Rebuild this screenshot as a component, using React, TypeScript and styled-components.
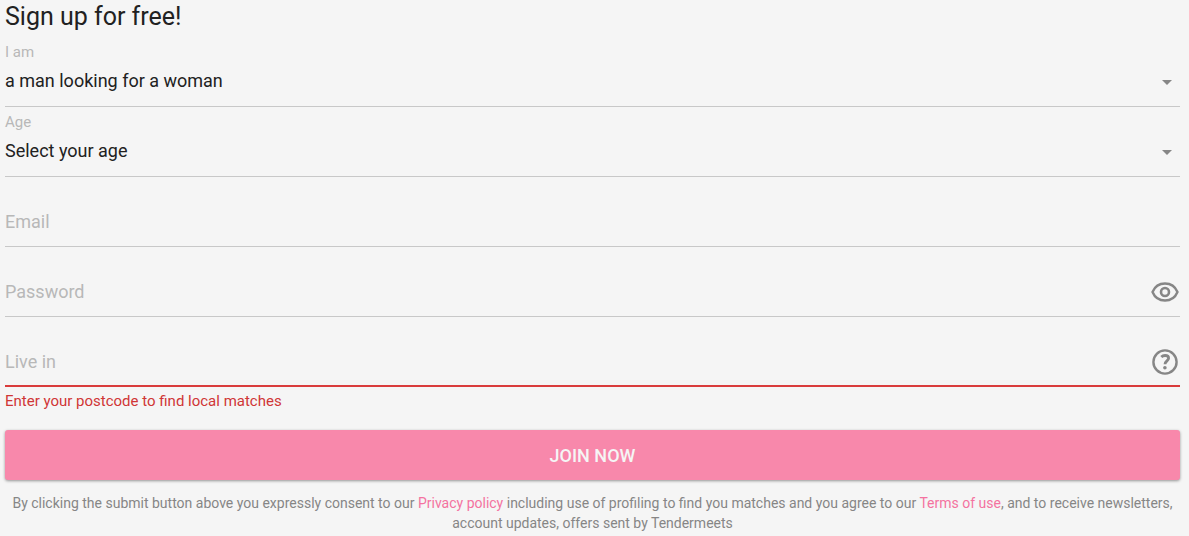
import React from 'react';
import styled, { createGlobalStyle, css } from 'styled-components';

const Global = createGlobalStyle`
  *, *::before, *::after { box-sizing: border-box; }
  body {
    margin: 0;
    background: #f5f5f5;
    color: #212121;
    font-family: Roboto, "Liberation Sans", sans-serif;
  }
`;

const Form = styled.form`
  display: flex;
  flex-direction: column;
  padding: 1px 9px 0 5px;
`;

const Title = styled.h1`
  margin: 0;
  font-size: 25px;
  font-weight: 400;
  line-height: 32px;
`;

const Field = styled.div<{ $error?: boolean }>`
  display: flex;
  flex-direction: column;
  height: 70px;
  padding-top: 5px;
  border-bottom: 1px solid #c8c8c8;
  ${({ $error }) => $error && css`border-bottom: 2px solid #d93b3b;`}
`;

const Fields = styled.div`
  display: flex;
  flex-direction: column;
  padding-top: 4px;
`;

const Label = styled.label`
  height: 20px;
  color: #b8b8b8;
  font-size: 15px;
  line-height: 20px;
`;

const Control = styled.div`
  display: flex;
  align-items: center;
  height: 40px;
  color: #868686;
`;

const controlText = css`
  flex: 1;
  min-width: 0;
  height: 40px;
  margin: 0;
  padding: 0 0 2px;
  border: 0;
  outline: 0;
  background: transparent;
  color: #212121;
  font: 400 18px/38px Roboto, "Liberation Sans", sans-serif;
`;

const Select = styled.select`
  ${controlText}
  appearance: none;
`;

const Input = styled.input`
  ${controlText}
  &::placeholder { color: #b8b8b8; opacity: 1; }
`;

const Arrow = styled.svg`
  width: 10px;
  height: 5px;
  margin-right: 8px;
  pointer-events: none;
`;

const IconButton = styled.button`
  display: flex;
  padding: 0;
  border: 0;
  background: transparent;
  color: inherit;
`;

const ErrorText = styled.p`
  margin: 0;
  padding-top: 4px;
  color: #d03636;
  font-size: 15px;
  line-height: 20px;
`;

const Submit = styled.button`
  height: 50px;
  margin: 19px 0 13px;
  border: 0;
  border-radius: 3px;
  background: #f888ab;
  box-shadow: 0 1px 3px rgba(0, 0, 0, 0.4);
  color: #f5f5f5;
  font: 500 18px/50px Roboto, "Liberation Sans", sans-serif;
`;

const Terms = styled.p`
  margin: 0;
  color: #868686;
  font-size: 14px;
  line-height: 20px;
  text-align: center;
`;

const Link = styled.a`
  color: #f472a0;
  text-decoration: none;
`;

function SelectField({ id, label, value }: { id: string; label: string; value: string }) {
  return (
    <Field>
      <Label htmlFor={id}>{label}</Label>
      <Control>
        <Select id={id} defaultValue={value}>
          <option>{value}</option>
        </Select>
        <Arrow viewBox="0 0 10 5" aria-hidden="true">
          <path d="M0 0h10L5 5z" fill="currentColor" />
        </Arrow>
      </Control>
    </Field>
  );
}

type InputFieldProps = {
  id: string;
  label: string;
  type: string;
  error?: boolean;
  children?: React.ReactNode;
};

function InputField({ id, label, type, error, children }: InputFieldProps) {
  return (
    <Field $error={error}>
      <Label htmlFor={id} aria-label={label} />
      <Control>
        <Input id={id} type={type} placeholder={label} aria-invalid={error} />
        {children}
      </Control>
    </Field>
  );
}

export default function App() {
  return (
    <>
      <Global />
      <Form onSubmit={(e) => e.preventDefault()}>
        <Title>Sign up for free!</Title>
        <Fields>
          <SelectField id="gender" label="I am" value="a man looking for a woman" />
          <SelectField id="age" label="Age" value="Select your age" />
          <InputField id="email" label="Email" type="email" />
          <InputField id="password" label="Password" type="password">
            <IconButton type="button" aria-label="Show password">
              <svg width="30" height="30" viewBox="0 0 30 30" fill="none" stroke="currentColor">
                <path d="M2.500 15C5 9 9.500 6.500 15 6.500S25 9 27.500 15C25 21 20.500 23.500 15 23.500S5 21 2.500 15z" strokeWidth="2.400" strokeLinejoin="round" />
                <circle cx="15" cy="15" r="4" strokeWidth="2.600" />
              </svg>
            </IconButton>
          </InputField>
          <InputField id="location" label="Live in" type="text" error>
            <IconButton type="button" aria-label="Location help">
              <svg width="30" height="30" viewBox="0 0 30 30" fill="none" stroke="currentColor">
                <circle cx="15" cy="15" r="11.600" strokeWidth="2.400" />
                <path d="M11.300 10c1-1 2.300-1.500 3.800-1.500 2.100 0 3.500 1.100 3.500 2.800 0 2.400-3.600 2.800-3.600 5.900" strokeWidth="2.800" />
                <circle cx="14.900" cy="20.700" r="1.800" fill="currentColor" stroke="none" />
              </svg>
            </IconButton>
          </InputField>
        </Fields>
        <ErrorText>Enter your postcode to find local matches</ErrorText>
        <Submit type="submit">JOIN NOW</Submit>
        <Terms>
          By clicking the submit button above you expressly consent to our <Link href="#privacy">Privacy policy</Link>{' '}
          including use of profiling to find you matches and you agree to our <Link href="#terms">Terms of use</Link>, and
          to receive newsletters, account updates, offers sent by Tendermeets
        </Terms>
      </Form>
    </>
  );
}
